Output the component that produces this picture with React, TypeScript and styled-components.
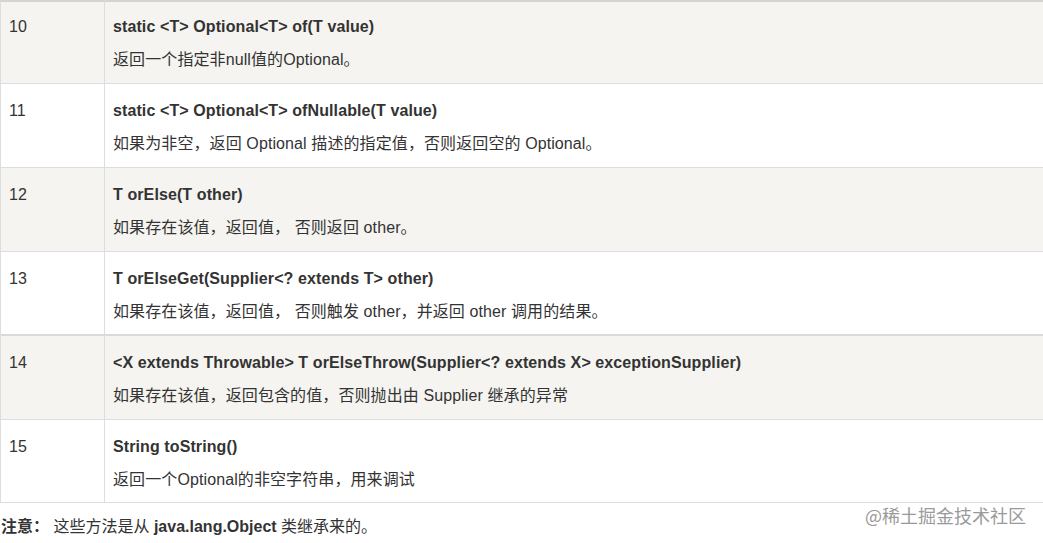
import React from "react";
import styled, { createGlobalStyle } from "styled-components";

const Global = createGlobalStyle`
  html, body { margin: 0; padding: 0; background: #fff; }
  body { font-family: "Liberation Sans", Arial, "Noto Sans CJK SC", sans-serif; color: #333; font-size: 16px; }
`;

const Page = styled.div`
  position: relative;
  width: 1043px;
  height: 543px;
  overflow: hidden;
`;

const Table = styled.div`
  width: 1060px;
  border-top: 2px solid #d4d4d4;
  border-left: 1px solid #ddd;
`;

const Row = styled.div<{ $shade: boolean; $thick?: boolean; $h: number; $first?: boolean }>`
  box-sizing: border-box;
  display: grid;
  grid-template-columns: 104px 1fr;
  background: ${(p) => (p.$shade ? "#f5f4f0" : "#fff")};
  border-bottom: ${(p) => (p.$thick ? "2px solid #dadada" : "1px solid #ddd")};
  height: ${(p) => p.$h}px;
  padding-top: ${(p) => (p.$first ? 13 : 15)}px;
`;

const NumCell = styled.div`
  padding: 15px 8px 0;
  margin-top: -15px;
  border-right: 1px solid #ddd;
  line-height: 24px;
`;

const BodyCell = styled.div`
  padding: 0 8px;
`;

const Title = styled.div`
  font-weight: bold;
  line-height: 24px;
  letter-spacing: 0.1px;
  white-space: nowrap;
`;

const Desc = styled.div`
  margin-top: 9px;
  line-height: 24px;
  letter-spacing: 0.1px;
  white-space: nowrap;
`;

const Note = styled.div`
  margin-top: 12px;
  line-height: 24px;
  padding-left: 1px;
  white-space: nowrap;
`;

const Strong = styled.b`
  font-weight: bold;
`;

const Watermark = styled.div`
  position: absolute;
  left: 865px;
  top: 502px;
  font-size: 18px;
  color: #9a9a9a;
  font-family: "Noto Sans CJK SC", sans-serif;
`;

const rows = [
  { n: "10", h: 82, t: "static <T> Optional<T> of(T value)", d: "返回一个指定非null值的Optional。" },
  { n: "11", h: 84, t: "static <T> Optional<T> ofNullable(T value)", d: "如果为非空，返回 Optional 描述的指定值，否则返回空的 Optional。" },
  { n: "12", h: 84, t: "T orElse(T other)", d: "如果存在该值，返回值， 否则返回 other。" },
  { n: "13", h: 84, t: "T orElseGet(Supplier<? extends T> other)", d: "如果存在该值，返回值， 否则触发 other，并返回 other 调用的结果。", thick: true },
  { n: "14", h: 84, t: "<X extends Throwable> T orElseThrow(Supplier<? extends X> exceptionSupplier)", d: "如果存在该值，返回包含的值，否则抛出由 Supplier 继承的异常" },
  { n: "15", h: 83, t: "String toString()", d: "返回一个Optional的非空字符串，用来调试" },
];

export default function App() {
  return (
    <Page>
      <Global />
      <Table>
        {rows.map((r, i) => (
          <Row key={r.n} $shade={i % 2 === 0} $thick={r.thick} $h={r.h} $first={i === 0}>
            <NumCell>{r.n}</NumCell>
            <BodyCell>
              <Title>{r.t}</Title>
              <Desc>{r.d}</Desc>
            </BodyCell>
          </Row>
        ))}
      </Table>
      <Note>
        <Strong>注意：</Strong> 这些方法是从 <Strong>java.lang.Object</Strong> 类继承来的。
      </Note>
      <Watermark>@稀土掘金技术社区</Watermark>
    </Page>
  );
}
